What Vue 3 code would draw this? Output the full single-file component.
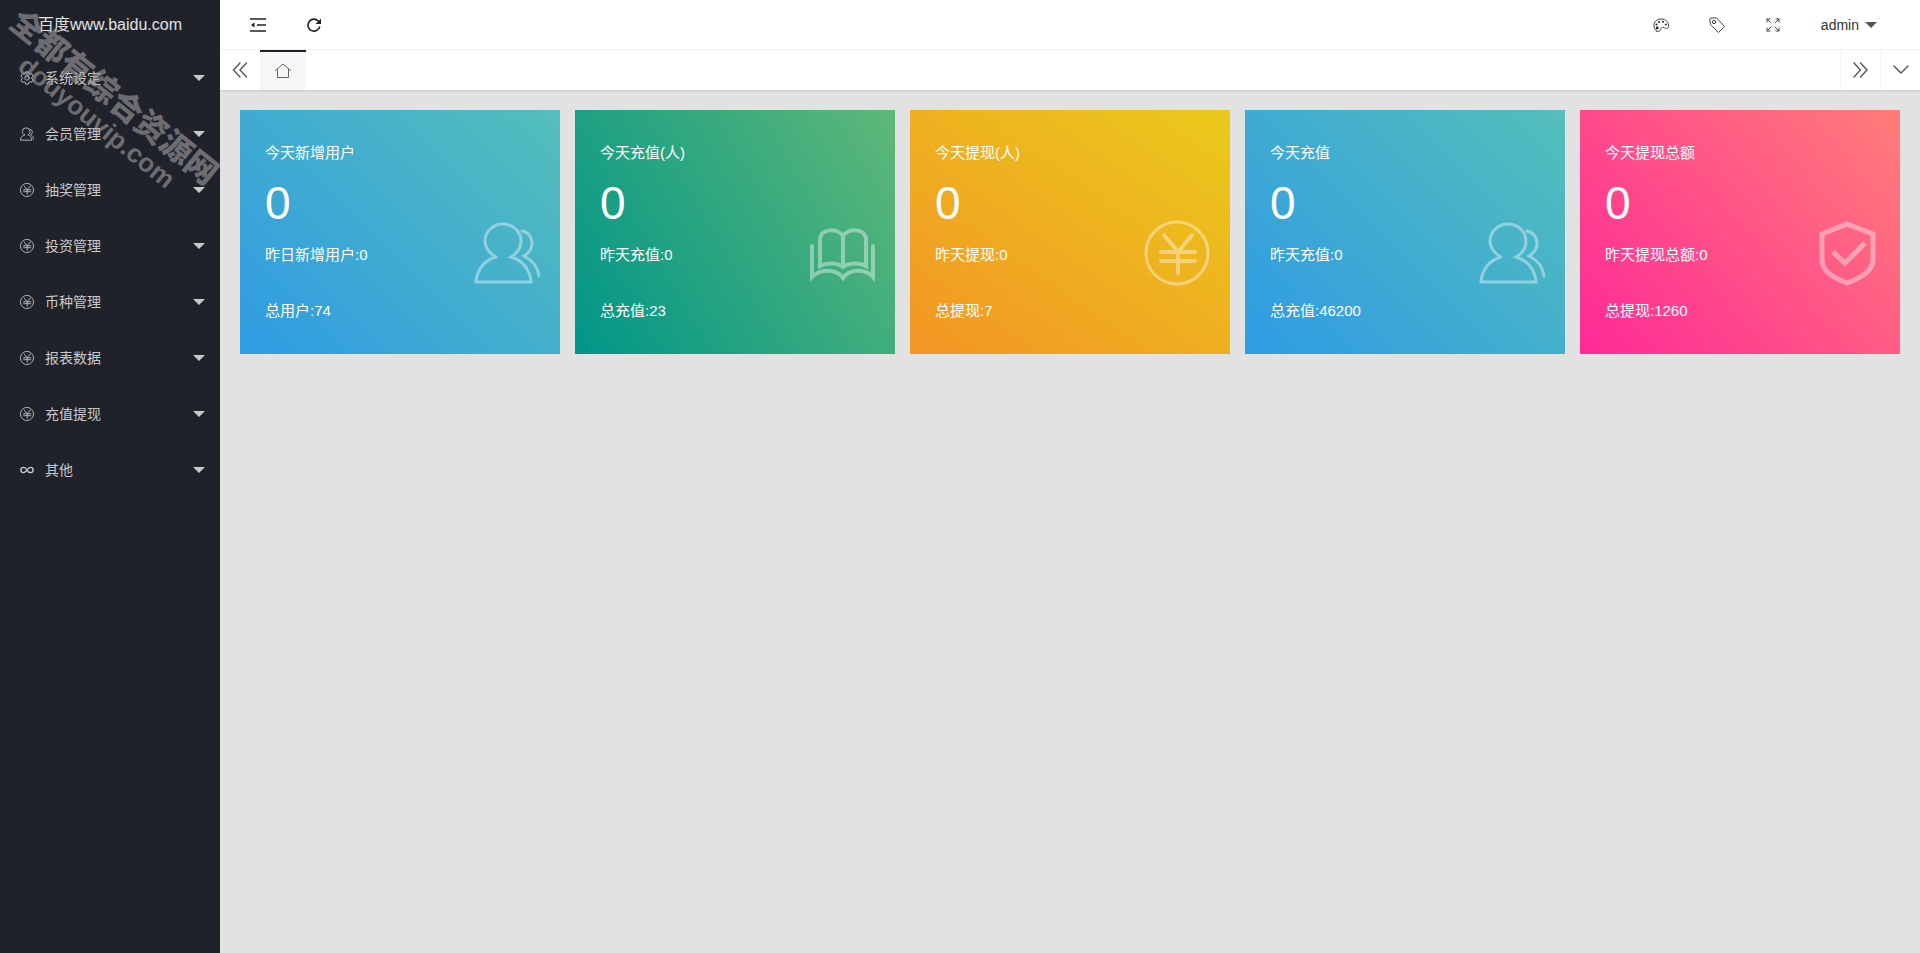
<script setup>
const menu = [
  { label: '系统设定', icon: 'gear' },
  { label: '会员管理', icon: 'users' },
  { label: '抽奖管理', icon: 'yen' },
  { label: '投资管理', icon: 'yen' },
  { label: '币种管理', icon: 'yen' },
  { label: '报表数据', icon: 'yen' },
  { label: '充值提现', icon: 'yen' },
  { label: '其他', icon: 'link' },
]

const cards = [
  { title: '今天新增用户', value: 0, prev: '昨日新增用户:0', total: '总用户:74', icon: 'users', tone: 'blue' },
  { title: '今天充值(人)', value: 0, prev: '昨天充值:0', total: '总充值:23', icon: 'book', tone: 'green' },
  { title: '今天提现(人)', value: 0, prev: '昨天提现:0', total: '总提现:7', icon: 'yen', tone: 'orange' },
  { title: '今天充值', value: 0, prev: '昨天充值:0', total: '总充值:46200', icon: 'users', tone: 'blue' },
  { title: '今天提现总额', value: 0, prev: '昨天提现总额:0', total: '总提现:1260', icon: 'shield', tone: 'pink' },
]
</script>

<template>
  <svg class="defs" aria-hidden="true">
    <symbol id="users" viewBox="0 0 66 66">
      <path d="M22 37C15 33 11 28 11 21A18 17 0 0 1 47 21C47 28 44 33 37 37C48 40 56 49 57 62H2C3 49 11 40 22 37" />
      <path d="M48 11C54 12 58 17 58 23C58 29 55 33 50 36C58 40 64 47 65 56" />
    </symbol>
    <symbol id="yen" viewBox="0 0 66 66">
      <circle cx="33" cy="33" r="31" />
      <path class="bold" d="M20 15L34 32L48 15M34 32V53M17 32H51M17 41H51" />
    </symbol>
    <symbol id="book" viewBox="0 0 66 66">
      <path class="bold" d="M34 16C29 8 12 8 11 19V46C18 42 29 43 34 47C39 43 50 42 57 46V19C56 8 39 8 34 16V47M3 26V57C12 48 28 49 34 58C40 49 56 48 64 57V26" />
    </symbol>
    <symbol id="shield" viewBox="0 0 66 66">
      <path class="heavy" d="M33 4L59 14V40C59 51 47 58 33 63C19 58 8 51 8 40V14ZM19 32L31 43L51 23" />
    </symbol>
    <symbol id="gear" viewBox="0 0 16 16">
      <path d="M6.5 1H9.5L10 3L11.5 3.8L13.4 3L15 5.6L13.5 7V9L15 10.4L13.4 13L11.5 12.2L10 13L9.5 15H6.5L6 13L4.5 12.2L2.6 13L1 10.4L2.5 9V7L1 5.6L2.6 3L4.5 3.8L6 3Z" />
      <circle cx="8" cy="8" r="2.5" />
    </symbol>
    <symbol id="link" viewBox="0 0 16 16">
      <path class="link-line" d="M8 8C6.500 5.500 5.500 5 4 5C0 5 0 11 4 11C7 11 8.500 5 12 5C16 5 16 11 12 11C10.500 11 9.500 10.500 8.500 9.200" />
    </symbol>
  </svg>

  <div class="app">
    <aside class="side">
      <a class="logo" href="#">百度www.baidu.com</a>
      <nav class="menu">
        <a v-for="item in menu" :key="item.label" class="menu-item" href="#">
          <svg class="menu-icon" :class="item.icon" aria-hidden="true"><use :href="'#' + item.icon" /></svg>
          <span class="menu-label">{{ item.label }}</span>
          <i class="caret"></i>
        </a>
      </nav>
      <div class="watermark" aria-hidden="true">
        <span class="mark-name">全都有综合资源网</span>
        <span class="mark-site">douyouvip.com</span>
      </div>
    </aside>

    <div class="main">
      <header class="header">
        <button class="tool" aria-label="折叠菜单">
          <svg class="ico" viewBox="0 0 16 16"><path class="dark" d="M0 2H16M7 8H16M0 14H16" /><path class="solid" d="M4.500 5.500V10.500L1 8Z" /></svg>
        </button>
        <button class="tool" aria-label="刷新">
          <svg class="ico" viewBox="0 0 16 16"><path class="dark" d="M13.800 9.500A6 6 0 1 1 12.300 4L14 5.500" /><path class="solid" d="M15 1.500V7H9.500Z" /></svg>
        </button>
        <div class="spacer"></div>
        <button class="tool" aria-label="主题">
          <svg class="ico" viewBox="0 0 16 16">
            <path d="M3.500 14C-1 11 0 2 8 2C13 2 16 5.500 15.500 9.500C15 12.500 12.500 11.500 11 10.500C9 9.500 7.800 11 7.500 12.500C7 14.500 5 15 3.500 14Z" />
            <circle class="solid" cx="4.200" cy="11" r="1.400" /><circle class="solid" cx="3.500" cy="7.500" r="1" /><circle class="solid" cx="6" cy="5" r="1" /><circle class="solid" cx="10" cy="4.800" r="1" /><circle class="solid" cx="12.800" cy="7.500" r="1" />
          </svg>
        </button>
        <button class="tool" aria-label="便签">
          <svg class="ico" viewBox="0 0 16 16"><path d="M.8 2.500Q.8 1 2 1L7.500.8L15.500 9.500L9.500 15.500L1.800 8Z" /><circle cx="5" cy="5" r="1.700" /></svg>
        </button>
        <button class="tool" aria-label="全屏">
          <svg class="ico" viewBox="0 0 16 16"><path d="M2 2L6 6M14 2L10 6M2 14L6 10M14 14L10 10M2 5V2H5M11 2H14V5M14 11V14H11M5 14H2V11" /></svg>
        </button>
        <button class="user">admin<i class="caret"></i></button>
      </header>

      <div class="tabs">
        <button class="tab-btn first" aria-label="向左">
          <svg class="ico" viewBox="0 0 16 16"><path class="mid" d="M8 1L1.500 8L8 15M14.500 1L8 8L14.500 15" /></svg>
        </button>
        <button class="tab-btn home" aria-label="主页">
          <svg class="ico" viewBox="0 0 16 16"><path d="M.5 7.500L8 1L15.500 7.500M2.500 6V14.500H13.500V6" /></svg>
        </button>
        <div class="spacer"></div>
        <button class="tab-btn" aria-label="向右">
          <svg class="ico" viewBox="0 0 16 16"><path class="mid" d="M1 1L7.500 8L1 15M7.500 1L14 8L7.500 15" /></svg>
        </button>
        <button class="tab-btn" aria-label="更多">
          <svg class="ico" viewBox="0 0 16 16"><path class="mid" d="M1 4L8 11L15 4" /></svg>
        </button>
      </div>

      <main class="cards">
        <section v-for="(card, i) in cards" :key="i" class="card" :class="card.tone">
          <div class="text">
            <h2 class="title">{{ card.title }}</h2>
            <p class="value">{{ card.value }}</p>
            <p class="row">{{ card.prev }}</p>
            <p class="row">{{ card.total }}</p>
          </div>
          <svg class="card-icon" aria-hidden="true"><use :href="'#' + card.icon" /></svg>
        </section>
      </main>
    </div>
  </div>
</template>

<style>
body {
  margin: 0;
  background: #e2e2e2;
}
</style>

<style scoped>
.defs {
  position: absolute;
  width: 0;
  height: 0;
}
.app {
  display: flex;
  min-height: 100vh;
  font: 14px/20px "Liberation Sans", "Noto Sans CJK SC", sans-serif;
  color: #333;
}
svg {
  fill: none;
  stroke: currentColor;
  stroke-width: 1;
  stroke-linecap: round;
}
button {
  padding: 0;
  border: 0;
  background: none;
  font: inherit;
  color: inherit;
  cursor: pointer;
}
a {
  color: inherit;
  text-decoration: none;
}
.bold { stroke-width: 4; }
.heavy { stroke-width: 5; stroke-linecap: butt; }
.link-line { stroke-width: 1.6; }
.dark { stroke: #222; stroke-width: 1.6; stroke-linecap: butt; }
.mid { stroke: #555; stroke-width: 1.4; }
.solid { fill: #222; stroke: none; }

.side {
  position: relative;
  flex: none;
  width: 220px;
  background: #20222a;
  color: #c8c9cd;
}
.logo {
  display: block;
  height: 50px;
  line-height: 50px;
  font-size: 16px;
  text-align: center;
  color: #e2e2e4;
}
.menu-item {
  display: flex;
  align-items: center;
  height: 56px;
  padding: 0 15px 0 20px;
}
.menu-icon {
  width: 14px;
  height: 14px;
  margin-right: 11px;
}
.menu-icon.users,
.menu-icon.yen {
  stroke-width: 4;
}
.menu-label { flex: 1; }
.caret {
  width: 0;
  height: 0;
  border: 6px solid transparent;
  border-top-color: currentColor;
  border-bottom: 0;
}
.watermark {
  position: absolute;
  top: 3px;
  left: 26px;
  display: flex;
  flex-direction: column;
  transform: rotate(39deg);
  transform-origin: 0 0;
  font-weight: 900;
  white-space: nowrap;
  color: rgba(160, 160, 162, 0.6);
  pointer-events: none;
}
.mark-name {
  font-size: 32px;
  line-height: 36px;
}
.mark-site {
  padding-left: 34px;
  font-size: 26px;
  line-height: 24px;
}

.main {
  flex: 1;
  min-width: 0;
}
.header {
  display: flex;
  height: 50px;
  box-sizing: border-box;
  padding: 0 28px 0 10px;
  border-bottom: 1px solid #f3f3f3;
  background: #fff;
}
.spacer { flex: 1; }
.tool {
  display: grid;
  place-items: center;
  width: 56px;
  color: #444;
}
.ico {
  width: 16px;
  height: 16px;
}
.user {
  display: flex;
  align-items: center;
  gap: 6px;
  padding: 0 15px 0 20px;
}
.user .caret { color: #555; }
.tabs {
  display: flex;
  height: 40px;
  background: #fff;
  box-shadow: 0 1px 2px rgba(0, 0, 0, 0.12);
}
.tab-btn {
  display: grid;
  place-items: center;
  width: 40px;
  border-left: 1px solid #f6f6f6;
  color: #666;
}
.tab-btn.first { border-left: 0; }
.tab-btn.home {
  width: 46px;
  border-left: 0;
  border-top: 2px solid #20222a;
  background: #f6f6f6;
}

.cards {
  display: grid;
  grid-template-columns: repeat(5, 1fr);
  gap: 15px;
  padding: 20px;
}
.card {
  display: flex;
  align-items: flex-end;
  justify-content: space-between;
  padding: 25px 20px 15px 25px;
  color: #fff;
}
.blue { background: linear-gradient(45deg, #2f9be4, #54bfba); }
.green { background: linear-gradient(60deg, #009688, #5fb878); }
.orange { background: linear-gradient(35deg, #f39525, #eaca1b); }
.pink { background: linear-gradient(50deg, #ff2997, #ff7d79); }
.title,
.value,
.row {
  margin: 0;
  font-size: 15px;
  font-weight: normal;
}
.title { line-height: 36px; }
.value {
  padding-top: 8px;
  font-size: 46px;
  line-height: 48px;
}
.row { line-height: 56px; }
.card-icon {
  width: 66px;
  height: 66px;
  margin-bottom: 53px;
  stroke-width: 3;
  opacity: 0.4;
}
</style>
